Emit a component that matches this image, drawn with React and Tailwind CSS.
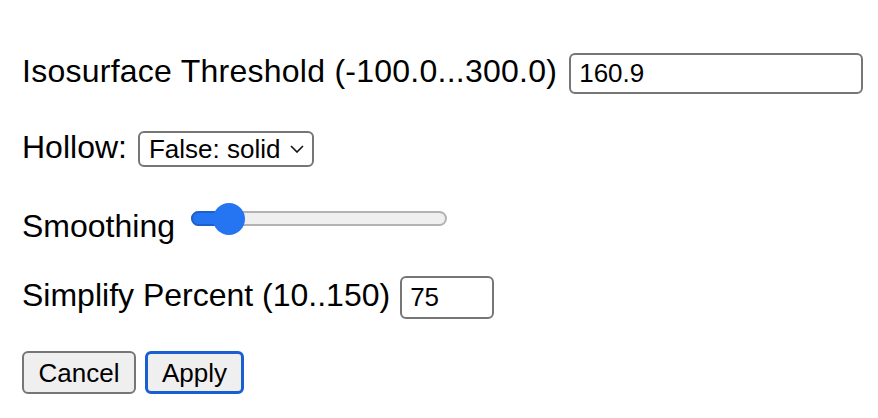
import { useState } from "react";

function ChevronDown() {
  return (
    <svg width="14" height="8" viewBox="0 0 14 8" className="ml-[10px]">
      <path d="M1 1 L7 7 L13 1" fill="none" stroke="#111" strokeWidth="1.6" />
    </svg>
  );
}

function Slider({ thumb }) {
  // thumb = centre of the thumb in px from the track start
  return (
    <div className="relative mb-[6px] ml-[16px] h-[33px] w-[256px]">
      <div className="absolute left-0 right-0 top-[8px] h-[15px] rounded-full border-2 border-[#b2b2b2] bg-[#efefef]" />
      <div
        className="absolute left-0 top-[8px] h-[15px] rounded-full border-2 border-[#1f5fcc] bg-[#2574f2]"
        style={{ width: thumb + 4 }}
      />
      <div
        className="absolute top-0 h-[32px] w-[32px] rounded-full bg-[#2574f2]"
        style={{ left: thumb - 16 }}
      />
    </div>
  );
}

export default function App() {
  const [threshold] = useState("160.9");
  const [simplify] = useState("75");

  return (
    <div className="min-h-[418px] bg-white pl-[22px] pt-[53px] font-['Liberation_Sans',Arial,sans-serif] text-[32px] leading-[37px] text-black">
      <div className="flex items-baseline">
        <span className="tracking-[0.25px]">Isosurface Threshold (-100.0...300.0)</span>
        <input
          readOnly
          value={threshold}
          className="ml-[12px] h-[41px] w-[294px] rounded-[6px] border-2 border-[#767676] bg-white px-[8px] text-[26px] outline-none"
        />
      </div>

      <div className="mt-[35px] flex items-baseline">
        <span>Hollow:</span>
        <div className="ml-[11px] flex h-[36px] w-[176px] items-center rounded-[6px] border-2 border-[#767676] bg-white pl-[9px] text-[26px] leading-[30px]">
          <span>False: solid</span>
          <ChevronDown />
        </div>
      </div>

      <div className="mt-[36px] flex items-end">
        <span className="leading-[32px]">Smoothing</span>
        <Slider thumb={38} />
      </div>

      <div className="mt-[34px] flex items-baseline">
        <span>Simplify Percent (10..150)</span>
        <input
          readOnly
          value={simplify}
          className="ml-[10px] h-[43px] w-[94px] rounded-[6px] border-2 border-[#767676] bg-white px-[8px] text-[26px] outline-none"
        />
      </div>

      <div className="mt-[32px] flex gap-[9px] text-[26px] leading-[30px]">
        <button className="h-[43px] w-[114px] rounded-[6px] border-2 border-[#767676] bg-[#efefef]">
          Cancel
        </button>
        <button className="h-[43px] w-[99px] rounded-[6px] border-[3px] border-[#1a5fd0] bg-[#efefef]">
          Apply
        </button>
      </div>
    </div>
  );
}
